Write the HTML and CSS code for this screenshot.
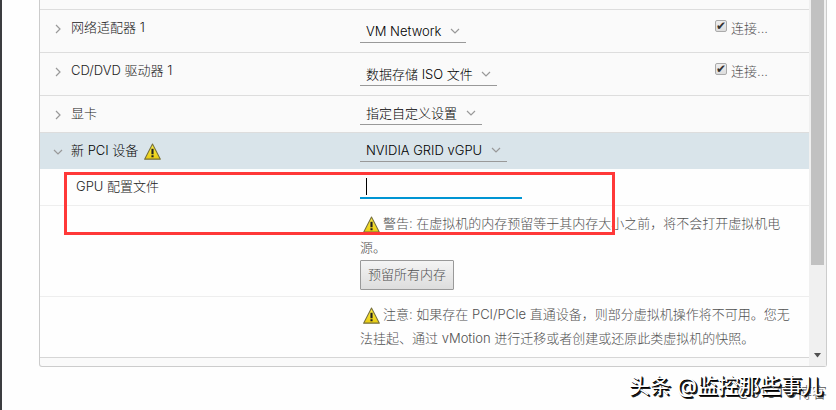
FILE: index.html
```
<!DOCTYPE html>
<html lang="zh-CN">
<head>
    <meta charset="UTF-8">
    <title>编辑设置</title>
    <link rel="stylesheet" href="styles.css">
</head>
<body>
    <svg class="symbols" aria-hidden="true">
        <symbol id="chevron" viewBox="0 0 10 10">
            <path d="M1 3l4 4 4-4" fill="none" stroke="#999" stroke-width="1.2"/>
        </symbol>
        <linearGradient id="yellow" x1="0" y1="0" x2="0" y2="1">
            <stop offset="0" stop-color="#fff04a"/>
            <stop offset="1" stop-color="#e8cb10"/>
        </linearGradient>
        <symbol id="warning" viewBox="0 0 16 16">
            <path d="M8 1L15.4 15.2H.6z" fill="url(#yellow)" stroke="#77703c" stroke-linejoin="round"/>
            <path d="M7 5.5h2v5H7zM7 11.5h2v2H7z" fill="#222"/>
        </symbol>
    </svg>
    <div class="page">
    <div class="panel">
      <div class="settings">
        <div class="row spacer"></div>
        <div class="row device">
          <div class="name">
            <svg class="chevron closed"><use href="#chevron"/></svg>
            <label for="network">网络适配器 1</label>
          </div>
          <div class="value">
            <span class="dropdown">
              <select id="network"><option>VM Network</option></select>
              <svg class="chevron"><use href="#chevron"/></svg>
            </span>
          </div>
          <label class="connect"><input type="checkbox" checked>连接...</label>
        </div>
        <div class="row device">
          <div class="name">
            <svg class="chevron closed"><use href="#chevron"/></svg>
            <label for="cdrom">CD/DVD 驱动器 1</label>
          </div>
          <div class="value">
            <span class="dropdown">
              <select id="cdrom"><option>数据存储 ISO 文件</option></select>
              <svg class="chevron"><use href="#chevron"/></svg>
            </span>
          </div>
          <label class="connect"><input type="checkbox" checked>连接...</label>
        </div>
        <div class="row compact">
          <div class="name">
            <svg class="chevron closed"><use href="#chevron"/></svg>
            <label for="video">显卡</label>
          </div>
          <div class="value">
            <span class="dropdown">
              <select id="video"><option>指定自定义设置</option></select>
              <svg class="chevron"><use href="#chevron"/></svg>
            </span>
          </div>
        </div>
        <div class="row compact selected">
          <div class="name">
            <svg class="chevron"><use href="#chevron"/></svg>
            <label for="pci">新 PCI 设备</label>
            <svg class="warning"><use href="#warning"/></svg>
          </div>
          <div class="value">
            <span class="dropdown">
              <select id="pci"><option>NVIDIA GRID vGPU</option></select>
              <svg class="chevron"><use href="#chevron"/></svg>
            </span>
          </div>
        </div>
        <div class="row detail profile">
          <div class="name"><label for="profile">GPU 配置文件</label></div>
          <div class="value">
            <span class="field"><input id="profile" type="text"><i class="caret"></i></span>
          </div>
        </div>
        <div class="row detail">
          <div class="name"></div>
          <div class="value message">
            <svg class="warning"><use href="#warning"/></svg>警告: 在虚拟机的内存预留等于其内存大小之前，将不会打开虚拟机电源。
            <button class="reserve" type="button">预留所有内存</button>
          </div>
        </div>
        <div class="row detail last">
          <div class="name"></div>
          <div class="value message">
            <svg class="warning"><use href="#warning"/></svg>注意: 如果存在 PCI/PCIe 直通设备，则部分虚拟机操作将不可用。您无法挂起、通过 vMotion 进行迁移或者创建或还原此类虚拟机的快照。
          </div>
        </div>
      </div>
      <div class="scrollbar">
        <div class="thumb"></div>
        <svg class="arrow" viewBox="0 0 9 5"><path d="M1 0h7L4.5 4.5z" fill="#505050"/></svg>
      </div>
      <div class="highlight"></div>
    </div>
    <div class="credits">
      <span class="site">@51CTO博客</span>
      <span class="author">头条 @监控那些事儿</span>
    </div>
    </div>
</body>
</html>
```
FILE: styles.css
```
* {
    box-sizing: border-box;
}

body {
    margin: 0;
    background-color: #fefefe;
    color: #505050;
    font-family: Inter, "Noto Sans CJK SC", sans-serif;
    font-size: 13px;
    font-weight: 300;
    line-height: 24px;
}

.symbols {
    position: absolute;
    width: 0;
    height: 0;
}

.page {
    min-height: 100vh;
    padding: 0 9px 0 37px;
    border-left: 2px solid #3c3d40;
    overflow: hidden;
}

.panel {
    position: relative;
    display: flex;
    border: 1px solid #ccc;
    border-top: 0;
    border-radius: 0 0 3px 3px;
    background-color: #fafafa;
}

.settings {
    flex: 1;
    padding-bottom: 8px;
}

.row {
    display: grid;
    grid-template-columns: 320px 1fr auto;
    border-bottom: 1px solid #ddd;
}

.spacer {
    height: 10px;
}

.device {
    height: 43px;
}

.compact {
    height: 37px;
}

.selected {
    height: 36px;
    border-bottom: 0;
    background-color: #d9e4ea;
}

.name {
    display: flex;
    align-items: center;
    height: 24px;
    margin-top: 5px;
    padding-left: 13px;
    color: #222;
}

.selected .name {
    color: #000;
}

.chevron {
    width: 10px;
    height: 10px;
}

.name .chevron {
    margin: 4px 8px 0 0;
}

.closed {
    transform: rotate(-90deg);
}

.warning {
    width: 17px;
    height: 17px;
}

.name .warning {
    margin: 2px 0 0 6px;
}

.dropdown {
    position: relative;
    display: inline-block;
    margin-top: 5px;
}

.device .dropdown {
    margin-top: 9px;
}

.dropdown .chevron {
    position: absolute;
    top: 7px;
    right: 6px;
    pointer-events: none;
}

select {
    display: block;
    height: 24px;
    padding: 0 24px 2px 6px;
    border: 0;
    border-bottom: 1px solid #999;
    border-radius: 0;
    appearance: none;
    background: transparent;
    color: #000;
    font: inherit;
}

.connect {
    display: flex;
    height: 24px;
    margin-top: 6px;
    padding-right: 41px;
}

.connect input {
    position: relative;
    width: 12px;
    height: 12px;
    margin: 4px 4px 0 0;
    border: 1px solid #aaa;
    border-radius: 2px;
    appearance: none;
    background: linear-gradient(#eee, #ddd);
}

.connect input:checked::after {
    content: "✔";
    position: absolute;
    top: -1px;
    left: 0;
    color: #333;
    font-family: "DejaVu Sans", sans-serif;
    font-size: 12px;
    line-height: 12px;
}

.detail {
    border-color: #eee;
    background-color: #fefefe;
}

.profile {
    height: 37px;
}

.detail .name {
    padding-left: 36px;
}

.field {
    position: relative;
    display: block;
    width: 162px;
    margin-top: 5px;
}

.field input {
    display: block;
    width: 100%;
    height: 25px;
    padding: 0 6px;
    border: 0;
    border-bottom: 2px solid #0095d3;
    outline: 0;
    background: transparent;
    font: inherit;
}

.caret {
    position: absolute;
    top: 4px;
    left: 6px;
    width: 1px;
    height: 17px;
    background-color: #000;
}

.message {
    padding: 5px 17px 6px 0;
}

.message .warning {
    margin: 0 3px 0 3px;
    vertical-align: -5px;
}

.reserve {
    display: block;
    height: 30px;
    margin-top: 1px;
    padding: 0 7px 3px;
    border: 1px solid #999;
    border-radius: 1px;
    background: linear-gradient(#f4f4f4, #ddd);
    color: #505050;
    font: inherit;
}

.last {
    padding-bottom: 1px;
    border-color: #d6d6d6;
}

.scrollbar {
    display: flex;
    flex-direction: column;
    justify-content: space-between;
    align-items: center;
    width: 17px;
    padding-bottom: 8px;
    background-color: #f0f0f0;
}

.thumb {
    width: 13px;
    height: 265px;
    background-color: #c1c1c1;
}

.arrow {
    width: 9px;
    height: 5px;
}

.highlight {
    position: absolute;
    top: 172px;
    left: 24px;
    width: 551px;
    height: 63px;
    border: 3px solid #ff3838;
    pointer-events: none;
}

.credits {
    position: relative;
    height: 40px;
    padding-right: 4px;
    text-align: right;
}

.author {
    position: relative;
    color: #fff;
    font-size: 21px;
    font-weight: 400;
    line-height: 38px;
    text-shadow: 1px 1px 0 #000, 2px 2px 0 #222;
}

.site {
    position: absolute;
    top: 14px;
    right: 0;
    color: #555;
    font-size: 15px;
}
```
